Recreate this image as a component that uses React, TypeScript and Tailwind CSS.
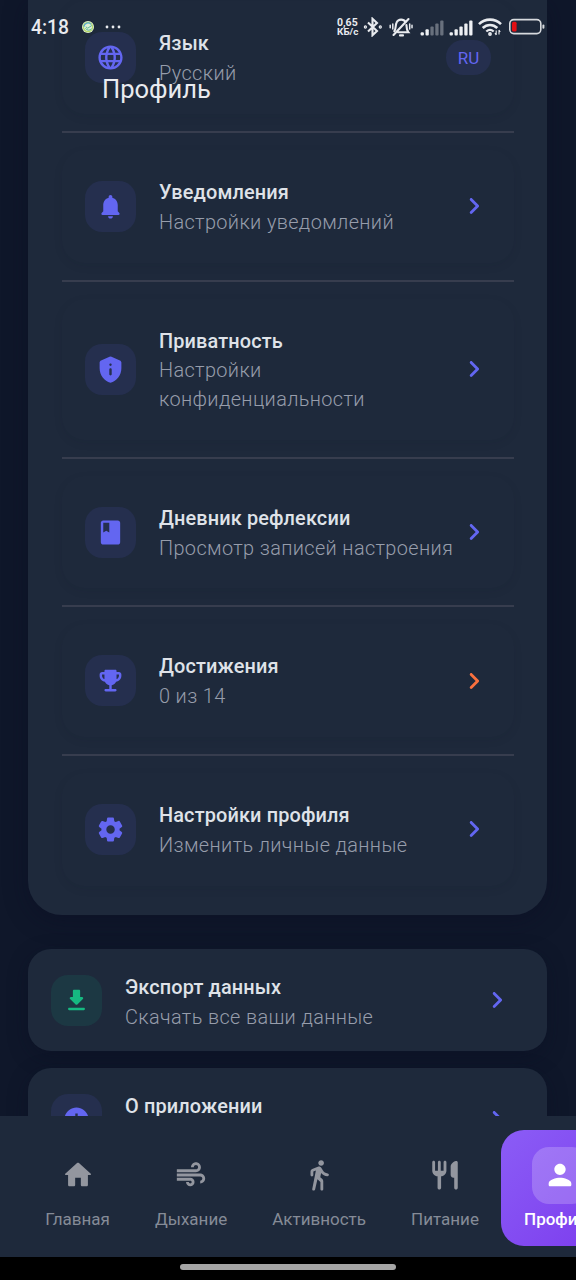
import React from "react";
import { MdLanguage, MdAir, MdBook, MdInfo } from "react-icons/md";

type IconProps = { d: string; className?: string };

function Glyph({ d, className }: IconProps) {
  return (
    <svg viewBox="0 0 24 24" fill="currentColor" className={className}>
      <path d={d} />
    </svg>
  );
}

const paths = {
  bell: "M12 22c1.1 0 2-.9 2-2h-4c0 1.1.89 2 2 2zm6-6v-5c0-3.07-1.64-5.64-4.5-6.32V4c0-.83-.67-1.5-1.5-1.5s-1.5.67-1.5 1.5v.68C7.63 5.36 6 7.92 6 11v5l-1.29 1.29c-.63.63-.19 1.71.7 1.71h13.17c.89 0 1.34-1.08.71-1.71L18 16z",
  privacy:
    "M11.19 1.36l-7 3.11C3.47 4.79 3 5.51 3 6.3V11c0 5.55 3.84 10.74 9 12 5.16-1.26 9-6.45 9-12V6.3c0-.79-.47-1.51-1.19-1.83l-7-3.11a1.93 1.93 0 0 0-1.62 0zM12 7c.55 0 1 .45 1 1s-.45 1-1 1-1-.45-1-1 .45-1 1-1zm0 4c.55 0 1 .45 1 1v4c0 .55-.45 1-1 1s-1-.45-1-1v-4c0-.55.45-1 1-1z",
  trophy:
    "M19 5h-2V4c0-.55-.45-1-1-1H8c-.55 0-1 .45-1 1v1H5c-1.1 0-2 .9-2 2v1c0 2.55 1.92 4.63 4.39 4.94.63 1.5 1.98 2.63 3.61 2.96V19H8c-.55 0-1 .45-1 1s.45 1 1 1h8c.55 0 1-.45 1-1s-.45-1-1-1h-3v-3.1c1.63-.33 2.98-1.46 3.61-2.96C19.08 12.63 21 10.55 21 8V7c0-1.1-.9-2-2-2zM5 8V7h2v3.82C5.84 10.4 5 9.3 5 8zm14 0c0 1.3-.84 2.4-2 2.82V7h2v1z",
  gear: "M19.5 12c0-.23-.01-.45-.03-.68l1.86-1.41c.4-.3.51-.86.26-1.3l-1.87-3.23a.987.987 0 0 0-1.25-.42l-2.15.91c-.37-.26-.76-.49-1.17-.68l-.29-2.31c-.06-.5-.49-.88-.99-.88h-3.73c-.51 0-.94.38-1 .88l-.29 2.31c-.41.19-.8.42-1.17.68l-2.15-.91c-.46-.2-1-.02-1.25.42L2.41 8.62c-.25.44-.14.99.26 1.3l1.86 1.41a7.343 7.343 0 0 0 0 1.35l-1.86 1.41c-.4.3-.51.86-.26 1.3l1.87 3.23c.25.44.79.62 1.25.42l2.15-.91c.37.26.76.49 1.17.68l.29 2.31c.06.5.49.88.99.88h3.73c.5 0 .93-.38.99-.88l.29-2.31c.41-.19.8-.42 1.17-.68l2.15.91c.46.2 1 .02 1.25-.42l1.87-3.23c.25-.44.14-.99-.26-1.3l-1.86-1.41c.03-.23.04-.45.04-.68zm-7.46 3.5c-1.93 0-3.5-1.57-3.5-3.5s1.57-3.5 3.5-3.5 3.5 1.57 3.5 3.5-1.57 3.5-3.5 3.5z",
  download:
    "M16.59 9H15V4c0-.55-.45-1-1-1h-4c-.55 0-1 .45-1 1v5H7.41c-.89 0-1.34 1.08-.71 1.71l4.59 4.59c.39.39 1.02.39 1.41 0l4.59-4.59c.63-.63.19-1.71-.7-1.71zM5 19c0 .55.45 1 1 1h12c.55 0 1-.45 1-1s-.45-1-1-1H6c-.55 0-1 .45-1 1z",
  chevron:
    "M9.29 6.71c-.39.39-.39 1.02 0 1.41L13.17 12l-3.88 3.88c-.39.39-.39 1.02 0 1.41.39.39 1.02.39 1.41 0l4.59-4.59c.39-.39.39-1.02 0-1.41L10.7 6.7c-.38-.38-1.02-.38-1.41.01z",
  home: "M10 19v-5h4v5c0 .55.45 1 1 1h3c.55 0 1-.45 1-1v-7h1.7c.46 0 .68-.57.33-.87L12.67 3.6c-.38-.34-.96-.34-1.34 0l-8.36 7.53c-.34.3-.13.87.33.87H5v7c0 .55.45 1 1 1h3c.55 0 1-.45 1-1z",
  walk: "M13.5 5.5c1.1 0 2-.9 2-2s-.9-2-2-2-2 .9-2 2 .9 2 2 2zM9.8 8.9L7.24 21.8c-.13.62.34 1.2.97 1.2h.06c.47 0 .87-.32.98-.78L10.9 15l2.1 2v5c0 .55.45 1 1 1s1-.45 1-1v-5.64c0-.55-.22-1.07-.62-1.45L12.9 13.5l.6-3c1.07 1.24 2.62 2.13 4.36 2.41.6.09 1.14-.39 1.14-1 0-.49-.36-.9-.84-.98-1.53-.25-2.8-1.15-3.46-2.33l-1-1.6c-.4-.6-1-1-1.7-1-.3 0-.5.1-.8.1L7.22 7.78C6.48 8.1 6 8.82 6 9.63V12c0 .55.45 1 1 1s1-.45 1-1V9.6l1.8-.7",
  food: "M16 6v6c0 1.1.9 2 2 2h.5v7c0 .69.56 1.25 1.25 1.25S21 21.7 21 21V3.13c0-.65-.61-1.13-1.24-.98C17.6 2.68 16 4.51 16 6zm-5 3H9V3c0-.55-.45-1-1-1s-1 .45-1 1v6H5V3c0-.55-.45-1-1-1s-1 .45-1 1v6c0 2.12 1.66 3.84 3.75 3.97V21c0 .69.56 1.25 1.25 1.25S9.25 21.7 9.25 21v-8.03C11.34 12.84 13 11.12 13 9V3c0-.55-.45-1-1-1s-1 .45-1 1v6z",
  person:
    "M12 12c2.21 0 4-1.79 4-4s-1.79-4-4-4-4 1.79-4 4 1.79 4 4 4zm0 2c-2.67 0-8 1.34-8 4v1c0 .55.45 1 1 1h14c.55 0 1-.45 1-1v-1c0-2.66-5.33-4-8-4z",
};

function IconTile({ children, green = false }: { children: React.ReactNode; green?: boolean }) {
  return (
    <div
      className={
        green
          ? "flex size-[51px] shrink-0 items-center justify-center rounded-[17px] bg-[#1c3843] text-[#16b981]"
          : "flex size-[51px] shrink-0 items-center justify-center rounded-[17px] bg-[#252f4e] text-[#6366f1]"
      }
    >
      {children}
    </div>
  );
}

function Labels({ title, subtitle }: { title: string; subtitle: string }) {
  return (
    <div className="min-w-0 flex-1 whitespace-pre-line pt-[3.4px]">
      <div className="mb-[1.4px] text-[19.9px] leading-[28.4px] font-medium tracking-[0.14px] text-[#dfe2e8]">{title}</div>
      <div className="text-[19.9px] leading-[28.4px] font-light tracking-[0.37px] text-[#979dab]">{subtitle}</div>
    </div>
  );
}

function SettingRow({
  icon,
  title,
  subtitle,
  trailing,
  tall = false,
}: {
  icon: React.ReactNode;
  title: string;
  subtitle: string;
  trailing: React.ReactNode;
  tall?: boolean;
}) {
  return (
    <div className={tall ? "h-[175.2px] shrink-0 py-[17px]" : "h-[146.6px] shrink-0 py-[17px]"}>
      <div className="flex h-full items-center gap-[23px] rounded-[23px] px-[23px] shadow-[0_3px_10px_rgba(12,20,40,0.08)]">
        <IconTile>{icon}</IconTile>
        <Labels title={title} subtitle={subtitle} />
        {trailing}
      </div>
    </div>
  );
}

function Chevron({ orange = false }: { orange?: boolean }) {
  return (
    <Glyph
      d={paths.chevron}
      className={orange ? "-ml-[23px] size-[34px] shrink-0 text-[#f9703e]" : "-ml-[23px] size-[34px] shrink-0 text-[#6366f1]"}
    />
  );
}

function Divider() {
  return <div className="h-[2px] shrink-0 bg-[#373d4e]" />;
}

function ActionCard({
  icon,
  title,
  subtitle,
  green = false,
}: {
  icon: React.ReactNode;
  title: string;
  subtitle: string;
  green?: boolean;
}) {
  return (
    <div className="flex h-[102px] shrink-0 items-center gap-[23px] rounded-[23px] bg-[#1e293b] pr-[33px] pl-[23px] shadow-[0_6px_20px_rgba(10,14,35,0.4)]">
      <IconTile green={green}>{icon}</IconTile>
      <div className="flex flex-1 pt-[3px]">
        <Labels title={title} subtitle={subtitle} />
      </div>
      <Chevron />
    </div>
  );
}

function NavItem({ icon, label }: { icon: React.ReactNode; label: string }) {
  return (
    <div className="flex h-[115px] shrink-0 flex-col items-center px-[22.5px] pt-[16.5px] text-[#93969f]">
      <div className="flex size-[57px] items-center justify-center">{icon}</div>
      <span className="mt-[4.5px] text-[17px] leading-[22px] text-[#858b97]">{label}</span>
    </div>
  );
}

function SignalBars({ strong }: { strong: number }) {
  return (
    <svg viewBox="0 0 24 16" className="h-4 w-6 shrink-0">
      {[0, 1, 2, 3, 4].map((i) => (
        <rect
          key={i}
          x={0.6 + i * 4.9}
          y={12.2 - i * 2.9}
          width="3.3"
          height={3.4 + i * 2.9}
          rx="1"
          fill={i < strong ? "#eef0f3" : "#68707d"}
        />
      ))}
    </svg>
  );
}

function StatusBar() {
  return (
    <div className="absolute inset-x-0 top-0 flex h-[54px] items-center pl-[31px] text-[#e9ebef]">
      <span className="w-[51px] pt-px text-[19.3px] leading-6 font-medium">4:18</span>
      <svg viewBox="0 0 12 12" className="size-3">
        <circle cx="6" cy="6" r="6" fill="#dff0d5" />
        <circle cx="6" cy="6" r="4.6" fill="none" stroke="#b5d767" strokeWidth="1.2" />
        <path d="M2 5.8a4 4 0 0 1 7-2.5" fill="none" stroke="#52a9d6" strokeWidth="1.1" />
        <path d="M3.8 5.8 5.7 7.2 9.8 4.5M3.5 7.2a3.5 3.5 0 0 0 6 .5" fill="none" stroke="#4bae95" strokeWidth="0.9" />
      </svg>
      <svg viewBox="0 0 16 4" className="ml-[11px] h-1 w-4 shrink-0" fill="currentColor">
        <circle cx="2" cy="2" r="1.4" />
        <circle cx="8" cy="2" r="1.4" />
        <circle cx="14" cy="2" r="1.4" />
      </svg>
      <div className="ml-[216px] w-[26px] text-[10.5px] leading-[9px] font-bold">
        <div>0,65</div>
        <div className="text-[9.9px]">КБ/с</div>
      </div>
      <svg viewBox="0 0 20 20" className="size-5 shrink-0" fill="none" stroke="currentColor" strokeWidth="2.1">
        <path d="M5 5.5 14 14l-4.5 4.2V1.8L14 6l-9 8.5" />
        <circle cx="2.4" cy="10" r="0.6" />
        <circle cx="17.3" cy="10" r="0.6" />
      </svg>
      <svg viewBox="0 0 24 20" className="ml-[6px] h-5 w-6 shrink-0" fill="none" stroke="currentColor" strokeWidth="2.1" strokeLinecap="round">
        <path d="M5.3 14.2C7.2 12 6.2 8 7.6 5.4 9.4 1.8 14.6 1.8 16.5 5" />
        <path d="M17.4 8c.1 3 .3 5 2 7.3H9M19.5 2 4.5 18" />
        <path d="M11 18.4h3" />
        <path d="M3.8 7v5M1.2 8.3v2.4M20.7 7v5M23 8.3v2.4" strokeWidth="1.5" />
      </svg>
      <div className="mt-px ml-[7px] flex gap-[5px]">
        <SignalBars strong={2} />
        <SignalBars strong={5} />
      </div>
      <svg viewBox="0 0 24 18" className="ml-[5px] h-[18px] w-6 shrink-0" fill="none" stroke="currentColor" strokeWidth="2.6">
        <path d="M1 6.1C7.2.1 16.8.1 23 6.1" />
        <path d="M4.7 10c4.2-4 10.4-4 14.6 0" />
        <path d="M8.3 13.5c2.3-2 5.1-2 7.4 0" strokeWidth="2.3" />
        <circle cx="12" cy="16" r="1.1" strokeWidth="1.6" />
        <path d="M18.2 12.5v4.5M21 12v4.5M17 15l1.2 2M22.2 14 21 12" strokeWidth="1.1" />
      </svg>
      <svg viewBox="0 0 38 18" className="ml-[6px] h-[18px] w-[38px] shrink-0">
        <rect x="1.8" y="1.6" width="31" height="14" rx="4" fill="none" stroke="#d7dade" strokeWidth="1.6" />
        <rect x="4" y="3.8" width="4.6" height="9.8" rx="1.5" fill="#e30f13" />
        <rect x="34.4" y="6.5" width="2" height="4.3" rx="1" fill="#d7dade" />
      </svg>
    </div>
  );
}

export default function App() {
  return (
    <div className="relative flex h-[1280px] w-[576px] flex-col overflow-hidden bg-[#0f172a] font-['Roboto','Noto_Sans',sans-serif]">
      <main className="flex h-[1116px] shrink-0 flex-col overflow-hidden pr-[29px] pl-[28px]">
        <section className="flex h-[915px] shrink-0 flex-col justify-end rounded-b-[34px] bg-[#1e293b] pr-[33px] pl-[34px] pb-[12.4px] shadow-[0_6px_24px_rgba(10,14,35,0.45)]">
          <SettingRow
            icon={<MdLanguage className="size-[29px]" />}
            title="Язык"
            subtitle="Русский"
            trailing={
              <div className="flex h-[35px] w-[45px] items-center justify-center rounded-[17px] bg-[#252f4e] pt-px text-[17px] text-[#6366f1]">RU</div>
            }
          />
          <Divider />
          <SettingRow
            icon={<Glyph d={paths.bell} className="size-[29px]" />}
            title="Уведомления"
            subtitle="Настройки уведомлений"
            trailing={<Chevron />}
          />
          <Divider />
          <SettingRow
            tall
            icon={<Glyph d={paths.privacy} className="size-[29px]" />}
            title="Приватность"
            subtitle={"Настройки\nконфиденциальности"}
            trailing={<Chevron />}
          />
          <Divider />
          <SettingRow
            icon={<MdBook className="size-[29px]" />}
            title="Дневник рефлексии"
            subtitle="Просмотр записей настроения"
            trailing={<Chevron />}
          />
          <Divider />
          <SettingRow
            icon={<Glyph d={paths.trophy} className="size-[29px]" />}
            title="Достижения"
            subtitle="0 из 14"
            trailing={<Chevron orange />}
          />
          <Divider />
          <SettingRow
            icon={<Glyph d={paths.gear} className="size-[29px]" />}
            title="Настройки профиля"
            subtitle="Изменить личные данные"
            trailing={<Chevron />}
          />
        </section>
        <div className="mt-[34px] flex flex-col gap-[17px]">
          <ActionCard
            green
            icon={<Glyph d={paths.download} className="size-[29px]" />}
            title="Экспорт данных"
            subtitle="Скачать все ваши данные"
          />
          <ActionCard icon={<MdInfo className="size-[29px]" />} title="О приложении" subtitle="Версия 1.0.0" />
        </div>
      </main>

      <nav className="relative flex h-[141px] shrink-0 items-start overflow-hidden bg-[#1e293b] pt-[14px] pl-[22.8px]">
        <NavItem icon={<Glyph d={paths.home} className="size-[34px]" />} label="Главная" />
        <NavItem icon={<MdAir className="size-[34px]" />} label="Дыхание" />
        <NavItem icon={<Glyph d={paths.walk} className="size-[34px]" />} label="Активность" />
        <NavItem icon={<Glyph d={paths.food} className="size-[34px]" />} label="Питание" />
        <div className="flex h-[115.5px] shrink-0 flex-col items-center rounded-[23px] bg-linear-to-br from-[#8b5cf6] to-[#7c3aed] px-[22.7px] pt-[16.5px] text-white">
          <div className="flex size-[57px] items-center justify-center rounded-[17px] bg-white/20">
            <Glyph d={paths.person} className="size-[34px]" />
          </div>
          <span className="mt-[4.5px] text-[17px] leading-[22px] font-medium">Профиль</span>
        </div>
      </nav>

      <footer className="flex h-[23px] shrink-0 justify-center bg-black pt-[7px]">
        <div className="h-[6px] w-[216px] rounded-full bg-[#a6a6a6]" />
      </footer>

      <h1 className="absolute top-[72px] left-[102px] text-[25.5px] leading-[34px] font-normal text-[#e9ebef]">Профиль</h1>
      <StatusBar />
    </div>
  );
}
